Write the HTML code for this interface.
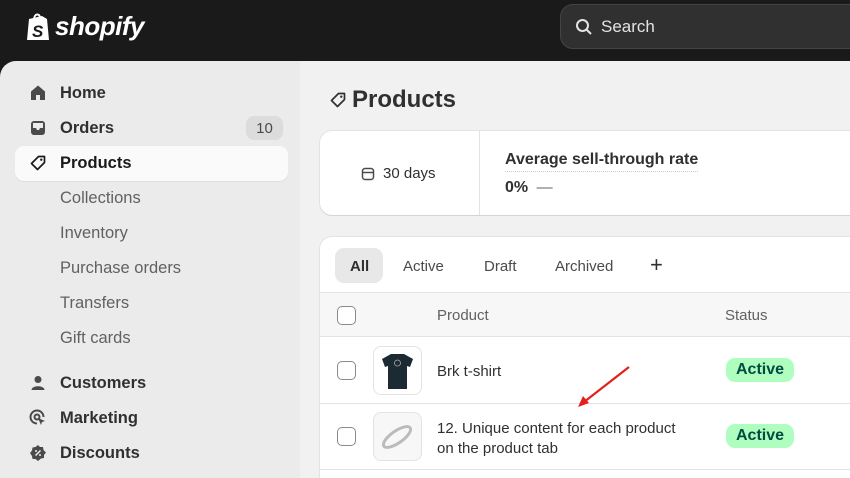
<!DOCTYPE html>
<html style="width:850px;height:478px;overflow:hidden"><head><style>
*{box-sizing:border-box;margin:0;padding:0}
body{width:850px;height:478px;overflow:hidden;background:#1a1a1a;font-family:"Liberation Sans",sans-serif;color:#303030;position:relative}
.top{position:absolute;left:0;top:0;width:850px;height:61px;background:#1a1a1a}
.logo{position:absolute;left:25px;top:11px;display:flex;align-items:center;color:#fff;font-weight:bold;font-style:italic;font-size:26px;letter-spacing:-0.5px}
.search{position:absolute;left:560px;top:4px;width:320px;height:45px;border-radius:13px;background:#303030;border:1px solid #444;color:#e3e3e3;font-size:17px;display:flex;align-items:center;padding-left:13px}
.side{position:absolute;left:0;top:61px;width:300px;height:417px;background:#ebebeb;border-top-left-radius:16px}
.main{position:absolute;left:300px;top:61px;width:550px;height:417px;background:#f1f1f1;overflow:hidden}
.ni{position:absolute;left:0;height:34px;display:flex;align-items:center;font-size:16.5px;color:#303030}
.ni svg{position:absolute;left:29px}
.ni span{position:absolute;left:60px;white-space:nowrap;top:8px}
.b{font-weight:bold}
.sub span{color:#616161;font-weight:normal}
.card{position:absolute;background:#fff;border-radius:12px;box-shadow:0 1px 0 #d4d4d4,0 0 0 1px #e3e3e3}
.chk{position:absolute;left:17px;width:19px;height:19px;border:1.5px solid #8a8a8a;border-radius:5px;background:#fff}
.pill{position:absolute;left:406px;background:#affebf;color:#014b40;font-weight:bold;font-size:16px;padding:3px 10px;border-radius:9px}
</style></head><body>
<div class="top">
 <div class="logo"><svg width="26" height="30" viewBox="0 0 26 30"><path d="M4 7 L17 4 L22 7 L24 28 L2 28 Z" fill="#fff"/><path d="M9 8 C9 1 15 1 15 6" stroke="#fff" stroke-width="2" fill="none"/><text x="7" y="25" font-family="Liberation Sans" font-weight="bold" font-size="17" fill="#1a1a1a">S</text></svg><span style="margin-left:4px">shopify</span></div>
 <div class="search"><svg width="20" height="20" viewBox="0 0 20 20"><circle cx="8.5" cy="8.5" r="5.5" stroke="#e3e3e3" stroke-width="2" fill="none"/><path d="M12.5 12.5 L17 17" stroke="#e3e3e3" stroke-width="2"/></svg><span style="margin-left:7px">Search</span></div>
</div>
<div class="side">
 <div class="ni b" style="top:15px"><svg width="18" height="18" viewBox="0 0 18 18"><path d="M9 1.5 L16 7.5 V16 H11 V11 H7 V16 H2 V7.5 Z" fill="#4a4a4a" stroke-linejoin="round"/></svg><span>Home</span></div>
 <div class="ni b" style="top:50px"><svg width="18" height="18" viewBox="0 0 18 18"><rect x="2" y="2" width="14" height="14" rx="3" fill="#4a4a4a"/><path d="M4 9 H7 L8 11 H10 L11 9 H14 V4 H4Z" fill="#ebebeb"/></svg><span>Orders</span><div style="position:absolute;left:246px;top:5px;width:37px;height:24px;border-radius:8px;background:#dcdcdc;font-size:15px;color:#4a4a4a;font-weight:normal;text-align:center;line-height:25px">10</div></div>
 <div style="position:absolute;left:15px;top:85px;width:273px;height:35px;background:#fafafa;border-radius:9px;box-shadow:0 1px 0 #ddd"></div>
 <div class="ni b" style="top:85px;color:#1a1a1a"><svg width="18" height="18" viewBox="0 0 18 18"><path d="M9.5 2.5 H15.5 V8.5 L8.5 15.5 L2.5 9.5 Z" fill="none" stroke="#1a1a1a" stroke-width="1.7" stroke-linejoin="round"/><circle cx="12.3" cy="5.7" r="1.2" fill="#1a1a1a"/></svg><span>Products</span></div>
 <div class="ni sub" style="top:120px"><span>Collections</span></div>
 <div class="ni sub" style="top:155px"><span>Inventory</span></div>
 <div class="ni sub" style="top:190px"><span>Purchase orders</span></div>
 <div class="ni sub" style="top:225px"><span>Transfers</span></div>
 <div class="ni sub" style="top:260px"><span>Gift cards</span></div>
 <div class="ni b" style="top:305px"><svg width="18" height="18" viewBox="0 0 18 18"><circle cx="9" cy="5.5" r="3.5" fill="#4a4a4a"/><path d="M2.5 16 C2.5 11 15.5 11 15.5 16 Z" fill="#4a4a4a"/></svg><span>Customers</span></div>
 <div class="ni b" style="top:340px"><svg width="18" height="18" viewBox="0 0 18 18"><path d="M14.5 8 A6.5 6.5 0 1 0 8 14.5" fill="none" stroke="#4a4a4a" stroke-width="2"/><circle cx="8" cy="8" r="2.5" fill="none" stroke="#4a4a4a" stroke-width="2"/><path d="M9 9 L16 12 L13 13 L12 16 Z" fill="#4a4a4a"/></svg><span>Marketing</span></div>
 <div class="ni b" style="top:375px"><svg width="18" height="18" viewBox="0 0 18 18"><path d="M9 1 L11 3 L14 3 L14.5 6 L17 8.5 L15 11 L15 14 L12 14.5 L9 17 L6.5 15 L3.5 15 L3 12 L1 9 L3 6.5 L3.5 3.5 L6.5 3 Z" fill="#4a4a4a"/><path d="M6.5 11.5 L11.5 6.5" stroke="#ebebeb" stroke-width="1.5"/><circle cx="7" cy="7" r="1" fill="#ebebeb"/><circle cx="11" cy="11" r="1" fill="#ebebeb"/></svg><span>Discounts</span></div>
</div>
<div class="main">
 <div style="position:absolute;left:29px;top:25px;display:flex;align-items:center;font-size:24px;font-weight:bold;color:#303030"><svg width="18" height="18" viewBox="0 0 18 18"><path d="M9.5 2.5 H15.5 V8.5 L8.5 15.5 L2.5 9.5 Z" fill="none" stroke="#303030" stroke-width="1.7" stroke-linejoin="round"/><circle cx="12.3" cy="5.7" r="1.2" fill="#303030"/></svg><span style="margin-left:5px">Products</span></div>
 <div class="card" style="left:20px;top:70px;width:560px;height:84px">
  <div style="position:absolute;left:40px;top:34px;font-size:15px;color:#303030;display:flex;align-items:center"><svg width="16" height="16" viewBox="0 0 16 16"><rect x="2.5" y="2.5" width="11" height="11" rx="2.5" fill="none" stroke="#4a4a4a" stroke-width="1.5"/><path d="M2.5 6.5 H13.5" stroke="#4a4a4a" stroke-width="1.5"/></svg><span style="margin-left:7px">30 days</span></div>
  <div style="position:absolute;left:159px;top:0;width:1px;height:84px;background:#e3e3e3"></div>
  <div style="position:absolute;left:185px;top:20px;font-size:16px;font-weight:bold;border-bottom:1.5px dotted #ccc;padding-bottom:2px">Average sell-through rate</div>
  <div style="position:absolute;left:185px;top:48px;font-size:16px;font-weight:bold">0% <span style="font-weight:normal;color:#616161;margin-left:4px">—</span></div>
 </div>
 <div class="card" style="left:20px;top:176px;width:560px;height:260px;overflow:hidden">
  <div style="position:absolute;left:15px;top:11px;width:48px;height:35px;background:#e8e8e8;border-radius:9px"></div>
  <div style="position:absolute;top:21px;left:30px;font-size:15px;font-weight:bold;color:#303030">All</div>
  <div style="position:absolute;top:21px;left:83px;font-size:15px;color:#4a4a4a">Active</div>
  <div style="position:absolute;top:21px;left:164px;font-size:15px;color:#4a4a4a">Draft</div>
  <div style="position:absolute;top:21px;left:235px;font-size:15px;color:#4a4a4a">Archived</div>
  <div style="position:absolute;top:15px;left:330px;font-size:22px;color:#303030">+</div>
  <div style="position:absolute;top:55px;left:0;width:560px;height:45px;background:#f7f7f7;border-top:1px solid #e3e3e3;border-bottom:1px solid #e3e3e3"></div>
  <div class="chk" style="top:69px"></div>
  <div style="position:absolute;top:70px;left:117px;font-size:15px;color:#616161">Product</div>
  <div style="position:absolute;top:70px;left:405px;font-size:15px;color:#616161">Status</div>
  <div class="chk" style="top:124px"></div>
  <div style="position:absolute;top:109px;left:53px;width:49px;height:49px;border:1px solid #e3e3e3;border-radius:8px;background:#fff"><svg width="47" height="47" viewBox="0 0 47 47"><path d="M8 12 L17 7 L30 7 L39 12 L36 20 L33 19 L33 42 L14 42 L14 19 L11 20 Z" fill="#1b2a33"/><circle cx="23.5" cy="16" r="3" fill="none" stroke="#aaa" stroke-width="0.8"/></svg></div>
  <div style="position:absolute;top:126px;left:117px;font-size:15px">Brk t-shirt</div>
  <div class="pill" style="top:121px">Active</div>
  <div style="position:absolute;top:166px;left:0;width:560px;height:1px;background:#e3e3e3"></div>
  <div class="chk" style="top:190px"></div>
  <div style="position:absolute;top:175px;left:53px;width:49px;height:49px;border:1px solid #e3e3e3;border-radius:8px;background:#f7f7f7"><svg width="47" height="47" viewBox="0 0 47 47"><ellipse cx="23" cy="24" rx="16" ry="6" transform="rotate(-35 23 24)" fill="none" stroke="#bbb" stroke-width="3"/></svg></div>
  <div style="position:absolute;top:182px;left:117px;font-size:15px;line-height:20px">12. Unique content for each product<br>on the product tab</div>
  <div class="pill" style="top:187px">Active</div>
  <div style="position:absolute;top:232px;left:0;width:560px;height:1px;background:#e3e3e3"></div>
 </div>
 <svg style="position:absolute;left:270px;top:300px" width="70" height="50" viewBox="0 0 70 50"><path d="M59 6 L14 41" stroke="#e3201b" stroke-width="2.2"/><path d="M8 46 L13 35 L19 42 Z" fill="#e3201b"/></svg>
</div>
</body></html>
